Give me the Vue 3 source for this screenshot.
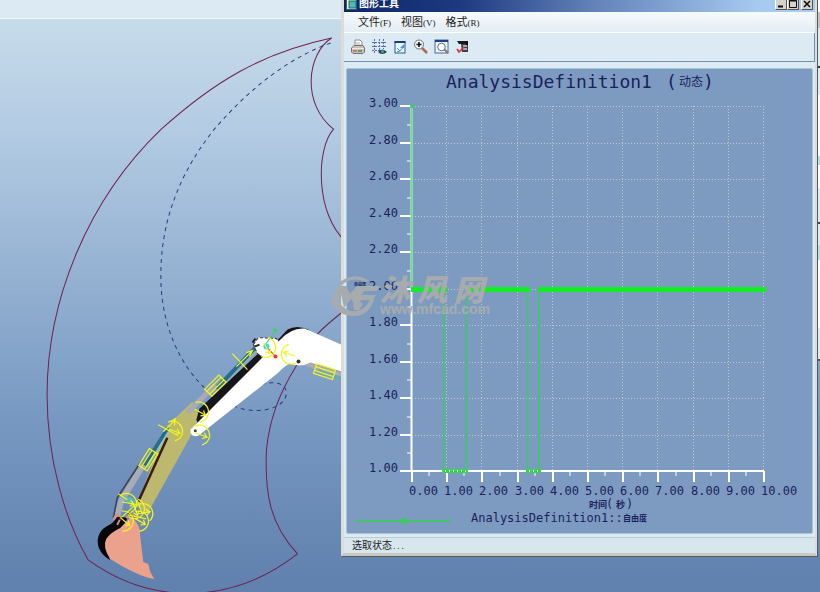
<template>
  <div class="desktop">
    <div class="strip"></div>
    <svg class="scene" viewBox="0 20 820 572" preserveAspectRatio="xMinYMin slice">
      <g class="trace">
        <path d="M331 39C260 54 212 84 161 130C88 200 47 300 47 395C47 460 65 520 88 560" />
        <path d="M88 560C150 605 230 606 297 554" />
        <path d="M297 554C270 525 264 495 266 450C269 420 278 395 296 366C308 340 322 328 345 310" />
        <path d="M331 39C306 55 301 105 333 130C315 150 315 215 345 242" />
      </g>
      <g class="trace dashed">
        <path d="M330 44C290 58 250 88 214 130C170 185 158 240 161 290C164 330 180 365 204 388" />
        <path d="M233 406C250 415 285 412 286 393C285 380 264 382 255 387" />
      </g>

      <!-- 斗杆 -->
      <path d="M167 426L192 402L199 417L190 437L147 514L136 506Z" fill="#bcb86e" />
      <path d="M167 438L138 502" stroke="#3b1c14" stroke-width="2.5" />

      <!-- 油缸 -->
      <path d="M257 346L216 389" stroke="#256d8c" stroke-width="4" />
      <path d="M259 348L219 391" stroke="#91aebc" stroke-width="2" />
      <path d="M215 385L187 413" stroke="#aaaab5" stroke-width="5" />
      <path d="M168 428L144 466" stroke="#256d8c" stroke-width="4" />
      <path d="M170 429L147 467" stroke="#90c7cf" stroke-width="1.5" />
      <path d="M143 465L121 501L116 520" stroke="#a9abb7" stroke-width="6" fill="none" />
      <path d="M140 463L117 498L113 519" stroke="#3c4252" stroke-width="1.5" fill="none" />
      <path d="M303 363L345 377" stroke="#a9abb7" stroke-width="5" />
      <path d="M317 371L345 380" stroke="#5caabc" stroke-width="3" />

      <!-- 动臂 -->
      <path d="M196 420L199 409L262 350L272 346L287 330Q296 325 308 330L270 362L200 429Z" fill="#16161a" />
      <path d="M253 345L258 338L276 339L280 344L263 358L257 354Z" fill="#fff" stroke="#333" stroke-dasharray="3 2" />
      <path d="M190 430L261 359L280 340Q291 328 304 329L345 347V373L310 363Q300 368 289 364Q281 369 278 373L198 436Q190 438 190 430Z" fill="#fff" />
      <circle cx="298" cy="362" r="2" fill="#333" />
      <circle cx="195" cy="431" r="1.5" fill="#444" />
      <path d="M252 343l3-4M254 347l5-2" stroke="#222" stroke-width="2" />
      <path d="M265 345L275 331" stroke="#37d65b" />
      <path d="M266 347L275 357" stroke="#d73b36" />
      <circle cx="275" cy="331" r="2" fill="#37d65b" />
      <circle cx="275" cy="357" r="2" fill="#ee3535" />
      <circle cx="266" cy="347" r="3" fill="#36dfe5" />

      <!-- 铲斗 -->
      <path d="M110 560C94 551 94 533 107 526Q113 524 117 517L127 518L124 528Q106 536 106 548Z" fill="#070708" />
      <path d="M120 528L131 517L136 522L139 528L143 562L148 564L150 572L154 579Q139 577 110 559Q102 547 106 539Q111 532 120 528Z" fill="#eba28c" />
      <path d="M113 520l3-5 5 2-4 8M126 518l4-4 5 2" stroke="#d78e80" stroke-width="2" fill="none" />
      <path d="M119 496L132 498L140 507L130 505Z" fill="#62b6b6" />
      <path d="M117 519h6M128 513l5 4" stroke="#222" stroke-width="2" />

      <g class="joint">
        <g v-for="(j, i) in joints" :key="i" :transform="`translate(${j.x} ${j.y}) rotate(${j.r})`">
          <path d="M-8 -6A10 10 0 1 1 5 9" />
          <path d="M-5 0H6M3 -3L7 0L3 3" />
        </g>
        <g v-for="(c, i) in cylinders" :key="'c' + i" :transform="`translate(${c.x} ${c.y}) rotate(${c.r})`">
          <path d="M-10 -5H10V5H-10ZM-10 -2H10M-10 2H10" />
        </g>
        <path d="M232 354L247 370M236 367L251 352M246 353L252 351L249 357" />
        <path d="M158 425L178 436M163 432L175 420M170 422L175 419L174 426" />
        <path d="M122 517L136 504M128 515L146 519M137 500L142 514M118 494L127 500" />
      </g>
    </svg>
    <div class="behind"></div>

    <section class="dialog">
      <header class="titlebar">
        <svg class="appIcon" width="11" height="11" viewBox="0 0 11 11">
          <rect x="0.5" y="0.5" width="10" height="10" fill="#fff8b4" stroke="#315d72" />
          <rect x="3" y="2" width="7" height="7" fill="#4eb9b5" stroke="#126b75" />
        </svg>
        <h1>图形工具</h1>
        <button class="winBtn" aria-label="最小化">
          <svg width="10" height="10" viewBox="0 0 10 10"><path d="M2 7.5H7" stroke="#111" stroke-width="2" /></svg>
        </button>
        <button class="winBtn" aria-label="最大化">
          <svg width="10" height="10" viewBox="0 0 10 10">
            <path d="M1.5 1.5H8.5V8.5H1.5ZM1 2H9" stroke="#111" fill="none" />
          </svg>
        </button>
        <button class="winBtn close" aria-label="关闭">
          <svg width="10" height="10" viewBox="0 0 10 10"><path d="M2 2L8 8M8 2L2 8" stroke="#111" stroke-width="1.6" /></svg>
        </button>
      </header>

      <nav class="menu">
        <button v-for="m in menus" :key="m.key">{{ m.label }}<span>({{ m.key }})</span></button>
      </nav>

      <div class="toolbar">
        <button aria-label="打印">
          <svg viewBox="0 0 16 16">
            <path d="M5 7V1H10L12 3V7" fill="#fff" stroke="#8b8988" />
            <path d="M6 4H10M6 6H11" stroke="#b3b0ad" />
            <path d="M1.5 9L4 6.5H13L14.5 9V13L13 14.5H3L1.5 13Z" fill="#c4c1bb" stroke="#77736e" />
            <path d="M2 9.5H14" stroke="#eeece8" />
            <path d="M3 12H7" stroke="#db7751" stroke-width="2" />
            <path d="M8 12H12" stroke="#669774" stroke-width="2" />
          </svg>
        </button>
        <button aria-label="网格">
          <svg viewBox="0 0 16 16">
            <path d="M3.5 0V15M8.5 0V12M12.5 0V10M1 3.5H15M1 7.5H15M1 11.5H10" stroke="#5c6ca8" stroke-dasharray="2 1" />
            <path d="M7 13Q11 8 16 13Q11 17 7 13Z" fill="#19484c" />
            <circle cx="11.5" cy="12.5" r="1.5" fill="#53a0a0" />
          </svg>
        </button>
        <button aria-label="重画">
          <svg viewBox="0 0 16 16">
            <rect x="3" y="3" width="10" height="11" fill="#e4f6ff" stroke="#2b5b9c" />
            <path d="M2.5 3H13.5" stroke="#183c77" stroke-width="2" />
            <path d="M5 13Q10 12 12 6M5 9L8 12" stroke="#4c87b8" fill="none" />
            <path d="M8 9L12 5V9Z" fill="#5295c7" />
          </svg>
        </button>
        <button aria-label="放大">
          <svg viewBox="0 0 16 16">
            <path d="M9 9L14 14" stroke="#a86c53" stroke-width="2.5" />
            <circle cx="6" cy="5.5" r="4.5" fill="#f5faff" stroke="#6d7074" />
            <path d="M3.5 5.5H8.5M6 3V8" stroke="#151515" stroke-width="1.6" />
          </svg>
        </button>
        <button aria-label="重新调整">
          <svg viewBox="0 0 16 16">
            <rect x="1" y="1" width="13" height="13" fill="#eaf7ff" stroke="#3e68a5" />
            <path d="M1 2H14" stroke="#1d4182" stroke-width="2" />
            <path d="M10 10L14 14" stroke="#9b7060" stroke-width="2" />
            <circle cx="7.5" cy="8" r="3.8" fill="#fff" stroke="#666c75" />
          </svg>
        </button>
        <button aria-label="完成">
          <svg viewBox="0 0 16 16">
            <path d="M2 2H13V5H4Z" fill="#19191b" />
            <path d="M6 5H13V13H7Z" fill="#3d4147" />
            <path d="M8 7H12M8 10H12" stroke="#cbd0d2" stroke-width="1.5" />
            <path d="M12 2V6" stroke="#111" stroke-width="2" />
            <path d="M2 10L4 13L9 8" stroke="#d52e35" stroke-width="1.6" fill="none" />
          </svg>
        </button>
      </div>

      <div class="panel">
        <svg class="chart" viewBox="347 69 465 464">
          <g class="grid">
            <path v-for="t in yTicks" :key="'gy' + t.label" :d="`M412 ${t.pos + 0.5}H764`" />
            <path v-for="t in xTicks" :key="'gx' + t.label" :d="`M${t.pos - 0.5} 106V471`" />
          </g>
          <g class="axis">
            <path d="M411.5 106V472M411 471H764" stroke-width="2" />
            <path v-for="t in yTicks" :key="'ty' + t.label" :d="`M400 ${t.pos}H411`" stroke-width="2" />
            <path v-for="t in xTicks" :key="'tx' + t.label" :d="`M${t.pos} 471V482`" stroke-width="2" />
            <path v-for="t in yTicks.slice(1)" :key="'my' + t.label" :d="`M407 ${t.pos - 18}H411`" />
            <path v-for="t in xTicks.slice(1)" :key="'mx' + t.label" :d="`M${t.pos - 18} 471V476`" />
          </g>
          <g class="series">
            <path class="rise" d="M411.5 106V289" />
            <path class="drop" d="M444 291V471M466.5 291V471M527.5 291V471M539 291V471" />
            <path class="low" d="M442 471H468M526 471H541" />
            <path class="high" d="M411 289.5H447M466 289.5H530M538 289.5H766" />
            <circle cx="412" cy="106" r="2" />
            <path class="key" d="M356 521H451" />
            <circle cx="404" cy="521" r="3" />
          </g>
          <g class="text">
            <text class="title" x="446" y="88">AnalysisDefinition1</text>
            <text class="title" x="666" y="88">(</text>
            <text x="679" y="86">动态</text>
            <text class="title" x="703" y="88">)</text>
            <text v-for="t in yTicks" :key="'ly' + t.label" x="369" :y="t.pos + 1">{{ t.label }}</text>
            <text v-for="t in xTicks" :key="'lx' + t.label" :x="t.pos - 3" y="495">{{ t.label }}</text>
            <text class="tiny" x="354" y="286">自由度</text>
            <text class="small" x="589" y="508">时间</text>
            <text x="606" y="508">(</text>
            <text class="small" x="616" y="508">秒</text>
            <text x="626" y="508">)</text>
            <text x="471" y="522">AnalysisDefinition1::</text>
            <text class="legend" x="623" y="521">自由度</text>
          </g>
        </svg>
      </div>

      <footer class="status">选取状态<span>...</span></footer>
    </section>

    <div class="watermark">
      <svg width="50" height="46" viewBox="330 272 50 46">
        <path d="M338 284A22 20 0 0 1 369 281L366 282A19 17 0 0 0 341 286Z" />
        <path d="M330 304L337 288Q339 285 346 286L350 294L357 286H380L377 291H364L362 295H376L373 300H361L355 306L351 299L344 308L341 294L337 304Z" />
        <path d="M332 304Q339 301 342 306Q355 317 367 305L371 298L374 300Q368 316 354 316Q339 316 332 304Z" />
        <path d="M353 305L358 300L363 304L359 310H354Z" />
      </svg>
      <div class="brand">
        <strong>沐 风 网</strong>
        <span>www.mfcad.com</span>
      </div>
    </div>
  </div>
</template>

<script setup>
import { computed, ref } from 'vue'

const menus = ref([
  { label: '文件', key: 'F' },
  { label: '视图', key: 'V' },
  { label: '格式', key: 'R' }
])

// 连接轴
const joints = [
  { x: 199, y: 412, r: 30 },
  { x: 173, y: 431, r: 20 },
  { x: 200, y: 435, r: 20 },
  { x: 290, y: 355, r: 200 },
  { x: 266, y: 348, r: 60 },
  { x: 127, y: 503, r: 10 },
  { x: 143, y: 513, r: -10 },
  { x: 124, y: 521, r: 40 },
  { x: 139, y: 521, r: 30 },
  { x: 135, y: 509, r: 70 }
]

// 伺服缸
const cylinders = [
  { x: 215, y: 386, r: -45 },
  { x: 148, y: 460, r: -58 },
  { x: 324, y: 372, r: 18 }
]

const yTicks = computed(() => {
  const list = []
  for (let i = 0; i <= 10; i++) {
    list.push({ label: (1 + i * 0.2).toFixed(2), pos: Math.round(471 - i * 36.5) })
  }
  return list.reverse()
})

const xTicks = computed(() => {
  const list = []
  for (let i = 0; i <= 10; i++) {
    list.push({ label: i.toFixed(2), pos: Math.round(412 + i * 35.2) })
  }
  return list
})
</script>

<style scoped>
.desktop {
  position: relative;
  min-height: 100vh;
  display: flex;
  flex-direction: column;
  overflow: hidden;
  background: linear-gradient(#c7dcea 3%, #b3cbe3 22%, #7899c2 70%, #6080ad 100%);
  font-family: 'Liberation Sans', 'Noto Sans CJK SC', sans-serif;
}
.strip {
  height: 18px;
  background: #dceaf3;
  border-bottom: 1px solid #f0f7f9;
}
.scene {
  flex: 1;
  width: 100%;
  min-height: 0;
  display: block;
}
.trace {
  fill: none;
  stroke: #70214f;
  stroke-width: 1;
}
.dashed {
  stroke: #263c7c;
  stroke-dasharray: 4 4;
}
.joint {
  fill: none;
  stroke: #f4f51b;
  stroke-width: 1.2;
}
.behind {
  position: absolute;
  top: 0;
  right: 0;
  width: 3px;
  height: 361px;
  background: linear-gradient(
    #fff 12px, #c6c2bf 12px 28px, #dceaf3 28px 66px, #333 66px 68px, #dceaf3 68px 95px,
    #fff 95px 156px, #b7e0df 156px 165px, #fff 165px 188px, #dceaf3 188px 222px,
    #444 222px 224px, #dceaf3 224px 245px, #b7e0df 245px 260px, #fff 260px 328px, #dceaf3 328px 359px, #555 359px
  );
}
.dialog {
  position: absolute;
  top: -7px;
  left: 341px;
  right: 3px;
  box-sizing: border-box;
  border: 3px solid #dcdcd8;
  border-right-width: 2px;
  border-bottom-color: #c9c9c4;
  box-shadow: 1px 1px 0 #555a60;
  background: #dceaf3;
  color: #222;
}
.titlebar {
  height: 16px;
  display: flex;
  align-items: center;
  padding: 0 2px;
  background: linear-gradient(90deg, #0d2668, #1d3a80 25%, #6080b8 52%, #a6caf0 88%);
}
.titlebar h1 {
  flex: 1;
  margin: 0 0 0 2px;
  font-size: 10px;
  line-height: 12px;
  font-weight: bold;
  color: #fff;
}
.winBtn {
  width: 12px;
  height: 12px;
  padding: 0;
  display: flex;
  align-items: center;
  justify-content: center;
  box-sizing: border-box;
  border: 1px solid;
  border-color: #fff #55555a #55555a #fff;
  background: #d6d2c9;
}
.close {
  margin-left: 2px;
}
.menu {
  display: flex;
  gap: 10px;
  height: 20px;
  padding: 0 14px;
  align-items: center;
  background: linear-gradient(#f5fafd, #e5edf3);
  border-bottom: 1px solid #fff;
}
.menu button {
  border: 0;
  padding: 0;
  background: none;
  color: #222;
  font: 11px/16px 'Noto Sans CJK SC', sans-serif;
}
.menu span {
  font-family: 'Liberation Serif', serif;
  font-size: 9px;
}
.toolbar {
  display: flex;
  align-items: center;
  height: 28px;
  padding: 0 3px;
  border-bottom: 1px solid #7290b2;
  border-right: 1px solid #7290b2;
}
.toolbar button {
  width: 21px;
  height: 22px;
  padding: 0;
  border: 0;
  background: none;
  display: flex;
  align-items: center;
  justify-content: center;
}
.toolbar svg {
  width: 16px;
  height: 16px;
}
.panel {
  margin: 6px 2px 3px;
  border: 1px solid #a5c5d2;
  border-radius: 2px;
  background: #7d9bc0;
}
.chart {
  display: block;
  width: 100%;
}
.grid {
  fill: none;
  stroke: #bccacb;
  stroke-width: 1;
  stroke-dasharray: 1 2;
}
.axis {
  fill: none;
  stroke: #fff;
}
.series {
  fill: #35cf58;
}
.series path {
  fill: none;
  stroke: #48c07a;
  stroke-width: 2;
}
.series .rise {
  stroke: #6ddc86;
}
.series .low {
  stroke: #2be03d;
  stroke-width: 4;
  stroke-dasharray: 3 1;
}
.series .high {
  stroke: #13ee24;
  stroke-width: 5;
}
.series .key {
  stroke: #3fc765;
}
.text {
  fill: #1b1f5c;
  font-family: 'DejaVu Sans Mono', 'Noto Sans CJK SC', monospace;
  font-size: 12px;
}
.text .title {
  font-size: 18px;
}
.text .small {
  font-size: 9px;
  font-weight: bold;
}
.text .legend {
  font-size: 8px;
  font-weight: bold;
}
.text .tiny {
  font-size: 4px;
  font-weight: bold;
}
.status {
  height: 15px;
  padding: 0 8px;
  border-top: 1px solid #b8ced9;
  background: #d8e6ee;
  font-size: 10px;
  line-height: 15px;
}
.status span {
  font-family: 'Liberation Mono', monospace;
  font-size: 7px;
}
.watermark {
  position: absolute;
  top: 272px;
  left: 330px;
  display: flex;
  color: #a8abae;
  fill: #a8abae;
  pointer-events: none;
}
.brand {
  display: flex;
  flex-direction: column;
}
.brand strong {
  font: italic 900 30px/32px 'Noto Sans CJK SC', sans-serif;
}
.brand span {
  font-size: 14px;
  line-height: 10px;
  font-weight: bold;
}
</style>

<style>
body {
  margin: 0;
}
</style>
